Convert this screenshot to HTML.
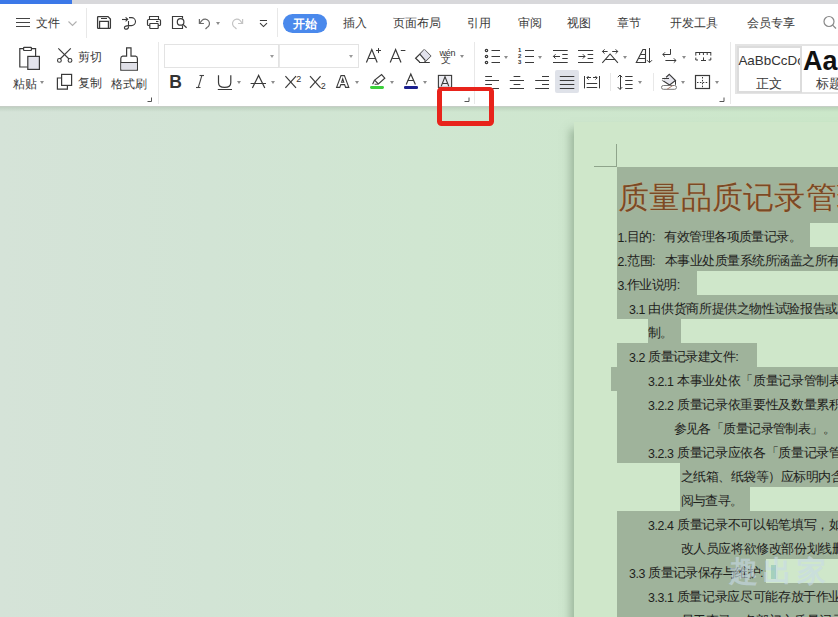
<!DOCTYPE html>
<html><head><meta charset="utf-8">
<style>
*{margin:0;padding:0;box-sizing:border-box}
html,body{width:838px;height:617px;overflow:hidden;background:#fff}
body{position:relative;font-family:"Liberation Sans",sans-serif;color:#333}
.a{position:absolute}
.t{position:absolute;font-size:12px;line-height:14px;white-space:nowrap;color:#3a3a3a}
svg{position:absolute;overflow:visible}
svg.ic{fill:none;stroke:#3a3a3a;stroke-width:1.1}
.dd{position:absolute;width:0;height:0;border-left:2.5px solid transparent;border-right:2.5px solid transparent;border-top:3px solid #8c8c8c}
.sep{position:absolute;width:1px;background:#e8e8e8}
.doc{position:absolute;font-size:13px;letter-spacing:-0.56px;line-height:14px;white-space:nowrap;color:#1e221c}
.n{font-style:normal;letter-spacing:-0.4px;font-size:12.4px;position:relative;top:0.7px}
.sel{position:absolute;background:#9fb39b}
</style></head><body>

<!-- top tab strip -->
<div class="a" style="left:0;top:0;width:838px;height:4px;background:#d8d8db"></div>
<div class="a" style="left:0;top:0;width:72px;height:4px;background:#3b78e8"></div>

<!-- ===== menu row ===== -->
<div class="a" style="left:16px;top:17.5px;width:14px;height:1.3px;background:#444"></div>
<div class="a" style="left:16px;top:21.7px;width:14px;height:1.3px;background:#444"></div>
<div class="a" style="left:16px;top:26px;width:14px;height:1.3px;background:#444"></div>
<div class="t" style="left:36px;top:15.5px">文件</div>
<svg style="left:0;top:0" width="1" height="1" class="ic"><polyline points="68.5,21.5 72.5,25.5 76.5,21.5" style="stroke:#b0b0b0"/></svg>
<div class="sep" style="left:86px;top:8px;height:30px"></div>

<svg style="left:0;top:0" width="1" height="1" class="ic">
 <!-- save -->
 <path d="M97.6,17.2 Q97.6,16.6 98.2,16.6 L108,16.6 L110.4,19 L110.4,27.8 Q110.4,28.4 109.8,28.4 L98.2,28.4 Q97.6,28.4 97.6,27.8 Z" style="stroke-width:1.3"/>
 <line x1="101" y1="18.5" x2="107" y2="18.5" style="stroke-width:1"/>
 <path d="M99.6,28.4 L99.6,21.4 L108.4,21.4 L108.4,28.4" style="stroke-width:1.2"/>
 <!-- share -->
 <line x1="122" y1="19.5" x2="127.5" y2="19.5"/>
 <polyline points="125.6,17.3 127.7,19.3 125.6,21.3"/>
 <path d="M129,17.6 L131.5,17.6 A4,4 0 0 1 131.5,25.6 L128.8,25.6"/>
 <line x1="128.5" y1="21" x2="128.5" y2="26.4"/>
 <path d="M128.6,26.4 C128.6,29.8 124.4,29.8 124.4,27.8 C124.4,26 127,25.6 128.8,25.6"/>
 <!-- print -->
 <path d="M149.5,19.5 L149.5,16.5 L158.5,16.5 L158.5,19.5" style="stroke-width:1.1"/>
 <path d="M149.8,25.5 L148.6,25.5 Q147.5,25.5 147.5,24.4 L147.5,20.6 Q147.5,19.5 148.6,19.5 L159.4,19.5 Q160.5,19.5 160.5,20.6 L160.5,24.4 Q160.5,25.5 159.4,25.5 L158.2,25.5" style="stroke-width:1.2"/>
 <line x1="156" y1="21.5" x2="158.5" y2="21.5" style="stroke-width:1.1"/>
 <rect x="149.8" y="23.5" width="8.4" height="5" rx="0.5" style="stroke-width:1.2"/>
 <!-- preview -->
 <path d="M182.5,18.6 L182.5,16.5 L172.5,16.5 L172.5,28.5 L182.5,28.5 L182.5,25.6" style="stroke-width:1.15"/>
 <circle cx="180.6" cy="21.9" r="3.3" style="stroke-width:1.2"/>
 <line x1="183" y1="24.4" x2="186.6" y2="27.8" style="stroke-width:1.2"/>
 <!-- undo -->
 <g style="stroke:#6a6a6a;stroke-width:1.2">
 <polyline points="199.4,19 199.4,23.5 203.9,23.5"/>
 <path d="M199.6,23.3 L202,20.4 A4.4,4.4 0 1 1 207,27.5 L205.5,29"/>
 </g>
 <g style="stroke:#c4c4c4;stroke-width:1.2">
 <polyline points="242.6,19 242.6,23.5 238.1,23.5"/>
 <path d="M242.4,23.3 L240,20.4 A4.4,4.4 0 1 0 235,27.5 L236.5,29"/>
 </g>
 <!-- customize -->
 <line x1="259.9" y1="20.5" x2="267" y2="20.5" style="stroke-width:1"/>
 <polyline points="260,23.2 263.5,26.6 267,23.2" style="stroke-width:1.1"/>
</svg>
<div class="dd" style="left:216px;top:22px"></div>
<div class="sep" style="left:276.5px;top:8px;height:29px"></div>

<!-- tabs -->
<div class="a" style="left:283px;top:13.5px;width:44px;height:19px;border-radius:10px;background:#4a89ec"></div>
<div class="t" style="left:292.5px;top:16.5px;color:#fff;font-weight:bold">开始</div>
<div class="t" style="left:342.5px;top:16px">插入</div>
<div class="t" style="left:392.5px;top:16px">页面布局</div>
<div class="t" style="left:466.5px;top:16px">引用</div>
<div class="t" style="left:517.5px;top:16px">审阅</div>
<div class="t" style="left:566.5px;top:16px">视图</div>
<div class="t" style="left:616.5px;top:16px">章节</div>
<div class="t" style="left:669.5px;top:16px">开发工具</div>
<div class="t" style="left:747px;top:16px">会员专享</div>
<svg style="left:0;top:0" width="1" height="1" class="ic"><circle cx="829" cy="21.5" r="5" style="stroke:#888;stroke-width:1.2"/><line x1="832.6" y1="25.1" x2="836" y2="28.5" style="stroke:#888;stroke-width:1.2"/></svg>

<!-- ===== toolbar ===== -->
<svg style="left:0;top:0" width="1" height="1" class="ic">
 <!-- paste -->
 <path d="M23.4,48.6 L19.8,48.6 L19.8,67 L27.6,67" style="stroke-width:1.2"/>
 <path d="M31.4,48.6 L35.6,48.6 L35.6,56.4" style="stroke-width:1.2"/>
 <rect x="23.6" y="47.3" width="7.8" height="3.2" rx="0.5" style="stroke-width:1.2"/>
 <rect x="27.8" y="56.4" width="11.6" height="13" style="fill:#e4e4ec;stroke-width:1.2"/>
 <!-- scissors -->
 <line x1="58.3" y1="48.3" x2="69" y2="59" style="stroke-width:1.1"/>
 <line x1="70.8" y1="48.3" x2="60.1" y2="59" style="stroke-width:1.1"/>
 <circle cx="59.4" cy="60.4" r="1.9" style="stroke-width:1.1"/>
 <circle cx="70" cy="60.4" r="1.9" style="stroke-width:1.1"/>
 <!-- copy -->
 <path d="M61.6,78 L57.4,78 L57.4,89.2 L67.4,89.2 L67.4,85.4" style="stroke-width:1.2"/>
 <rect x="61.6" y="74.4" width="10" height="11" style="fill:#fff;stroke-width:1.2"/>
 <!-- brush -->
 <path d="M126.6,56.2 L126.6,47.8 L131,47.8 L131,56.2 L135.6,56.2 Q137.4,56.4 137.4,58.6 L137.4,70.2 L120.8,70.2 L120.8,58.6 Q120.8,56.4 122.6,56.2 Z" style="stroke-width:1.2"/>
 <rect x="121.4" y="62.6" width="15.4" height="7" style="fill:#e0e0e8;stroke:none"/>
 <line x1="120.8" y1="62.5" x2="137.4" y2="62.5" style="stroke-width:1"/>
</svg>
<div class="t" style="left:77.5px;top:50px">剪切</div>
<div class="t" style="left:77.5px;top:75.5px">复制</div>
<div class="t" style="left:13px;top:76.5px">粘贴</div>
<div class="dd" style="left:40px;top:81px"></div>
<div class="t" style="left:111px;top:76.5px">格式刷</div>
<svg style="left:0;top:0" width="1" height="1" class="ic"><polyline points="147.5,101.5 151.5,101.5 151.5,97.5" style="stroke:#555;stroke-width:1"/></svg>
<div class="sep" style="left:157.5px;top:42px;height:62px"></div>

<!-- font boxes -->
<div class="a" style="left:163.5px;top:44px;width:115.5px;height:23.5px;border:1px solid #e3e3e3;background:#fff"></div>
<div class="a" style="left:278.5px;top:44px;width:80px;height:23.5px;border:1px solid #e3e3e3;border-left:1px solid #e8e8e8;background:#fff"></div>
<div class="dd" style="left:269.5px;top:55px;border-top-color:#9a9a9a"></div>
<div class="dd" style="left:348.5px;top:55px;border-top-color:#9a9a9a"></div>

<!-- B I U A X2 X2 A -->
<div class="a" style="left:169.2px;top:73px;font-size:17.5px;line-height:18px;font-weight:bold;color:#333">B</div>
<svg style="left:0;top:0" width="1" height="1" class="ic">
 <g style="stroke:#444;stroke-width:1.1">
 <line x1="199.5" y1="75.5" x2="204" y2="75.5"/>
 <line x1="196" y1="87.5" x2="200.5" y2="87.5"/>
 <line x1="201.8" y1="75.8" x2="198.2" y2="87.6"/>
 </g>
 <path d="M218.5,75.2 L218.5,82.5 Q218.5,87.4 224.6,87.4 Q230.8,87.4 230.8,82.5 L230.8,75.2" style="stroke-width:1.2"/>
 <line x1="217.8" y1="89.5" x2="232" y2="89.5" style="stroke-width:1"/>
 <polyline points="252.4,88 258.6,75.4 264.8,88" style="stroke-width:1.2"/>
 <line x1="250.6" y1="83.5" x2="266" y2="83.5" style="stroke-width:1"/>
 <line x1="285.4" y1="76.2" x2="296" y2="87.8" style="stroke-width:1.2"/>
 <line x1="296" y1="76.2" x2="285.4" y2="87.8" style="stroke-width:1.2"/>
 <line x1="310" y1="76.2" x2="320.6" y2="87.8" style="stroke-width:1.2"/>
 <line x1="320.6" y1="76.2" x2="310" y2="87.8" style="stroke-width:1.2"/>
 <path d="M336.6,87.4 L341,75.6 L344.4,75.6 L348.8,87.4 L345.6,87.4 L344.6,84.6 L340.8,84.6 L339.8,87.4 Z M341.6,82.2 L343.8,82.2 L342.7,78.8 Z" style="stroke-width:1.1"/>
</svg>
<div class="a" style="left:296.2px;top:75.2px;font-size:9px;line-height:9px;color:#333">2</div>
<div class="a" style="left:320.8px;top:82.2px;font-size:9px;line-height:9px;color:#333">2</div>
<div class="dd" style="left:237px;top:81px"></div>
<div class="dd" style="left:271px;top:81px"></div>
<div class="dd" style="left:355px;top:81px"></div>

<!-- A+ A- eraser wen -->
<svg style="left:0;top:0" width="1" height="1" class="ic">
 <polyline points="366.4,62.6 371.8,49.6 377.2,62.6" style="stroke-width:1.2"/>
 <line x1="368.4" y1="58.5" x2="375.2" y2="58.5" style="stroke-width:1"/>
 <line x1="376" y1="50.5" x2="381" y2="50.5" style="stroke-width:1"/>
 <line x1="378.5" y1="48.1" x2="378.5" y2="53.1" style="stroke-width:1"/>
 <polyline points="390.2,62.6 395.6,49.6 401,62.6" style="stroke-width:1.2"/>
 <line x1="392.2" y1="58.5" x2="399" y2="58.5" style="stroke-width:1"/>
 <line x1="400.8" y1="50.5" x2="405.4" y2="50.5" style="stroke-width:1"/>
 <!-- eraser -->
 <path d="M424.3,49.6 L430.6,55.9 L424.6,62 M419.6,62 L415.6,58.2 L424.3,49.6" style="stroke-width:1.2"/>
 <path d="M424.3,49.6 L430.6,55.9 L425.2,61.2 L419.9,54.4 Z" style="fill:#e2e2ec;stroke:none"/>
 <line x1="419.8" y1="54.2" x2="425.4" y2="60.6" style="stroke-width:1.2"/>
 <line x1="419" y1="62.5" x2="429.8" y2="62.5" style="stroke-width:1"/>
</svg>
<div class="a" style="left:439.6px;top:49px;font-size:9px;line-height:9px;color:#333;letter-spacing:-0.3px">wén</div>
<div class="a" style="left:441.4px;top:55px;font-size:10px;line-height:10px;color:#333">文</div>
<div class="dd" style="left:460px;top:55px"></div>

<!-- highlighter, font color, shading -->
<svg style="left:0;top:0" width="1" height="1" class="ic">
 <path d="M372.6,84.2 L374.4,80.4 L381.6,74.6 L384.8,78.2 L378.4,84 L374.6,84.2" style="stroke-width:1.15"/>
 <line x1="374.6" y1="80.2" x2="378.4" y2="84" style="stroke-width:1.1"/>
 <polyline points="406.2,84.4 410.8,74 415.4,84.4" style="stroke-width:1.2"/>
 <line x1="407.8" y1="80.5" x2="413.8" y2="80.5" style="stroke-width:1"/>
 <rect x="438.4" y="75.4" width="13.2" height="12" style="fill:#ececf2;stroke-width:1.1"/>
 <polyline points="441.2,86.2 445,76.8 448.8,86.2" style="stroke-width:1.1"/>
 <line x1="442.4" y1="83.5" x2="447.6" y2="83.5" style="stroke-width:1"/>
</svg>
<div class="a" style="left:370px;top:85.9px;width:13.8px;height:2.8px;border-radius:1.4px;background:#3cd03c"></div>
<div class="a" style="left:404px;top:86.2px;width:13.8px;height:2.6px;border-radius:1.3px;background:#1a1f8e"></div>
<div class="dd" style="left:389.5px;top:81px"></div>
<div class="dd" style="left:423px;top:81px"></div>
<svg style="left:0;top:0" width="1" height="1" class="ic"><polyline points="464.5,101.5 469,101.5 469,97.5" style="stroke:#555;stroke-width:1"/></svg>
<div class="sep" style="left:474px;top:42px;height:62px"></div>

<!-- paragraph group -->
<svg style="left:0;top:0" width="1" height="1" class="ic">
 <g style="stroke-width:1">
 <circle cx="486.5" cy="50.5" r="1.2" style="stroke-width:1.2"/><circle cx="486.5" cy="56.5" r="1.2" style="stroke-width:1.2"/><circle cx="486.5" cy="62.5" r="1.2" style="stroke-width:1.2"/>
 <line x1="491.5" y1="50.5" x2="500" y2="50.5"/><line x1="491.5" y1="56.5" x2="500" y2="56.5"/><line x1="491.5" y1="62.5" x2="500" y2="62.5"/>
 <line x1="525" y1="50.5" x2="534" y2="50.5"/><line x1="525" y1="56.5" x2="534" y2="56.5"/><line x1="525" y1="62.5" x2="534" y2="62.5"/>
 <!-- dec indent -->
 <line x1="553" y1="50.5" x2="567.7" y2="50.5"/><line x1="553" y1="62.5" x2="567.7" y2="62.5"/>
 <line x1="562.3" y1="54.5" x2="567.7" y2="54.5"/><line x1="562.3" y1="58.5" x2="567.7" y2="58.5"/>
 <line x1="553.4" y1="56.5" x2="560" y2="56.5"/><polyline points="555.6,54.2 553.4,56.4 555.6,58.6"/>
 <!-- inc indent -->
 <line x1="578" y1="50.5" x2="593.2" y2="50.5"/><line x1="578" y1="62.5" x2="593.2" y2="62.5"/>
 <line x1="587.6" y1="54.5" x2="593.2" y2="54.5"/><line x1="587.6" y1="58.5" x2="593.2" y2="58.5"/>
 <line x1="578.4" y1="56.5" x2="585" y2="56.5"/><polyline points="582.8,54.2 585,56.4 582.8,58.6"/>
 <!-- align left/center/right -->
 <line x1="485.2" y1="76.5" x2="492" y2="76.5"/><line x1="485.2" y1="80.5" x2="499" y2="80.5"/><line x1="485.2" y1="84.5" x2="492" y2="84.5"/><line x1="485.2" y1="88.5" x2="499" y2="88.5"/>
 <line x1="513.6" y1="76.5" x2="520.3" y2="76.5"/><line x1="509.8" y1="80.5" x2="524" y2="80.5"/><line x1="513.6" y1="84.5" x2="520.3" y2="84.5"/><line x1="509.8" y1="88.5" x2="524" y2="88.5"/>
 <line x1="542" y1="76.5" x2="549" y2="76.5"/><line x1="535.2" y1="80.5" x2="549" y2="80.5"/><line x1="542" y1="84.5" x2="549" y2="84.5"/><line x1="535.2" y1="88.5" x2="549" y2="88.5"/>
 </g>
</svg>
<div class="a" style="left:518px;top:47px;font-size:6px;line-height:6px;font-weight:bold;color:#333">1</div>
<div class="a" style="left:518px;top:53.3px;font-size:6px;line-height:6px;font-weight:bold;color:#333">2</div>
<div class="a" style="left:518px;top:59.3px;font-size:6px;line-height:6px;font-weight:bold;color:#333">3</div>
<div class="dd" style="left:504px;top:55.5px"></div>
<div class="dd" style="left:538px;top:55.5px"></div>
<div class="a" style="left:555.3px;top:70.2px;width:23.5px;height:23.2px;border-radius:2px;background:#dfe2e9"></div>
<svg style="left:0;top:0" width="1" height="1" class="ic">
 <g style="stroke-width:1">
 <line x1="559.8" y1="76.5" x2="574.3" y2="76.5"/><line x1="559.8" y1="80.5" x2="574.3" y2="80.5"/><line x1="559.8" y1="84.5" x2="574.3" y2="84.5"/><line x1="559.8" y1="88.5" x2="574.3" y2="88.5"/>
 </g>
 <g style="stroke-width:1">
 <!-- distributed -->
 <line x1="584.5" y1="76" x2="584.5" y2="88.4"/><line x1="599.5" y1="76" x2="599.5" y2="88.4"/>
 <line x1="586.6" y1="83.5" x2="597.2" y2="83.5"/><line x1="586.6" y1="87.5" x2="597.2" y2="87.5"/>
 <line x1="587" y1="77.5" x2="591" y2="77.5"/><polyline points="588.6,76 586.8,77.8 588.6,79.6"/>
 <line x1="593" y1="77.5" x2="597" y2="77.5"/><polyline points="595.4,76 597.2,77.8 595.4,79.6"/>
 <!-- chinese layout -->
 <line x1="602.4" y1="51.5" x2="607.6" y2="51.5"/><polyline points="604.6,49.3 602.4,51.5 604.6,53.7"/>
 <line x1="612.2" y1="51.5" x2="617.8" y2="51.5"/><polyline points="615.6,49.3 617.8,51.5 615.6,53.7"/>
 <polyline points="602.3,62.8 610.1,54 617.9,62.8" style="stroke-width:1.1"/>
 <line x1="605" y1="59.5" x2="615.2" y2="59.5"/>
 <!-- sort -->
 <path d="M642.9,49.5 L645.5,49.5 L645.5,62.5 L636.3,62.5 Z" style="stroke-width:1.1"/>
 <line x1="640.6" y1="54.5" x2="645.5" y2="54.5"/><line x1="638.6" y1="58.5" x2="645.5" y2="58.5"/>
 <line x1="649.5" y1="48" x2="649.5" y2="62.6"/><polyline points="647,60.2 649.5,62.7 652,60.2"/>
 <!-- return -->
 <polyline points="670.5,49 670.5,54.5 662.8,54.5"/><polyline points="665,52.3 662.8,54.5 665,56.7"/>
 <line x1="665.4" y1="60.5" x2="676" y2="60.5"/><polyline points="673.8,58.3 676,60.5 673.8,62.7"/>
 <!-- ruler -->
 <line x1="695.4" y1="52.5" x2="711.2" y2="52.5"/>
 <polyline points="695.8,52.6 695.8,55.6"/><polyline points="699.6,52.6 699.6,55"/><polyline points="703.4,52.6 703.4,55"/><polyline points="707.2,52.6 707.2,55"/><polyline points="710.8,52.6 710.8,55.6"/>
 <polyline points="695.8,57.6 695.8,60 698,60"/><polyline points="710.8,57.6 710.8,60 708.6,60"/>
 <line x1="701" y1="60.5" x2="706" y2="60.5"/><line x1="703.5" y1="57.4" x2="703.5" y2="60"/>
 </g>
</svg>
<div class="dd" style="left:623px;top:55.5px"></div>
<div class="dd" style="left:681.5px;top:55.5px"></div>
<div class="sep" style="left:609.5px;top:72.5px;height:18.5px"></div>
<div class="sep" style="left:652.5px;top:72.5px;height:18.5px"></div>
<svg style="left:0;top:0" width="1" height="1" class="ic">
 <g style="stroke-width:1">
 <!-- line spacing -->
 <line x1="620.5" y1="75" x2="620.5" y2="89.4"/><polyline points="617.8,77.2 620,75 622.2,77.2"/><polyline points="617.8,87.2 620,89.4 622.2,87.2"/>
 <line x1="625.2" y1="76.5" x2="632.6" y2="76.5"/><line x1="625.2" y1="80.5" x2="632.6" y2="80.5"/><line x1="625.2" y1="84.5" x2="632.6" y2="84.5"/><line x1="625.2" y1="88.5" x2="632.6" y2="88.5"/>
 <!-- shading -->
 <path d="M669.3,74.3 L675.5,80.5 L669.6,85 L662.6,80.5 Z" style="fill:#e7e7ef;stroke-width:1.1"/>
 <path d="M662.6,80.5 L666,77.2" style="stroke:#fff;stroke-width:1.6"/>
 <line x1="662.2" y1="78.5" x2="669" y2="78.5"/>
 <line x1="675.5" y1="80.5" x2="675.5" y2="84.8"/>
 <rect x="661.5" y="85.5" width="15" height="3.8" rx="1.9" style="stroke:#777"/>
 <line x1="667" y1="89.3" x2="672.8" y2="85.5" style="stroke:#a87c6c"/>
 <!-- borders -->
 <rect x="695.5" y="75.5" width="14" height="13" style="stroke-width:1.2"/>
 <line x1="702.5" y1="77" x2="702.5" y2="88" style="stroke-dasharray:1.5 1.4"/>
 <line x1="697" y1="82.5" x2="708" y2="82.5" style="stroke-dasharray:1.5 1.4"/>
 </g>
</svg>
<div class="dd" style="left:638px;top:81px"></div>
<div class="dd" style="left:681px;top:81px"></div>
<div class="dd" style="left:715px;top:81px"></div>
<svg style="left:0;top:0" width="1" height="1" class="ic"><polyline points="719.5,101.5 724,101.5 724,97.5" style="stroke:#555;stroke-width:1"/></svg>
<div class="sep" style="left:730px;top:42px;height:62px"></div>

<!-- styles gallery -->
<div class="a" style="left:735px;top:44px;width:110px;height:50px;border:2px solid #e4e4e4;background:#fff"></div>
<div class="a" style="left:736.5px;top:45.5px;width:65px;height:47px;border:2px solid #dcdcdc"></div>
<div class="a" style="left:738.4px;top:54.3px;width:62px;overflow:hidden;font-size:13.4px;line-height:14px;color:#333;white-space:nowrap">AaBbCcDc</div>
<div class="t" style="left:756px;top:77px;font-size:12.5px">正文</div>
<div class="a" style="left:803px;top:46.3px;font-size:27px;line-height:30px;font-weight:bold;color:#111;white-space:nowrap">Aa</div>
<div class="t" style="left:816px;top:77px;font-size:12.5px">标题</div>

<!-- toolbar bottom border/shadow -->
<div class="a" style="left:0;top:106px;width:838px;height:511px;background:linear-gradient(90deg,#d5e3d8 0%,#d2e4d5 25%,#d0e6d1 50%,#cbe7c9 100%)"></div>
<div class="a" style="left:0;top:105.5px;width:838px;height:1px;background:#c6cec6"></div>
<div class="a" style="left:0;top:106.5px;width:838px;height:5px;background:linear-gradient(rgba(160,180,160,0.4),rgba(160,180,160,0))"></div>

<!-- page -->
<div class="a" style="left:574px;top:122px;width:300px;height:520px;background:#cfe7ca;box-shadow:-6px 5px 8px -2px rgba(110,140,110,0.5)"></div>
<div class="a" style="left:616px;top:144px;width:1px;height:23px;background:#8fa48b"></div>
<div class="a" style="left:594px;top:166px;width:23px;height:1px;background:#8fa48b"></div>

<!-- selection blocks -->
<div class="sel" style="left:617px;top:167px;width:221px;height:56px"></div>
<div class="sel" style="left:617px;top:223px;width:193px;height:24px"></div>
<div class="sel" style="left:617px;top:247px;width:221px;height:24px"></div>
<div class="sel" style="left:617px;top:271px;width:80px;height:24px"></div>
<div class="sel" style="left:617px;top:295px;width:221px;height:24px"></div>
<div class="sel" style="left:648px;top:319px;width:33px;height:24px"></div>
<div class="sel" style="left:617px;top:343px;width:140px;height:24px"></div>
<div class="sel" style="left:611px;top:367px;width:227px;height:24px"></div>
<div class="sel" style="left:617px;top:391px;width:221px;height:72px"></div>
<div class="sel" style="left:680px;top:463px;width:158px;height:24px"></div>
<div class="sel" style="left:680px;top:487px;width:70px;height:24px"></div>
<div class="sel" style="left:617px;top:511px;width:221px;height:48px"></div>
<div class="sel" style="left:617px;top:559px;width:149px;height:24px"></div>
<div class="sel" style="left:617px;top:583px;width:221px;height:40px"></div>

<!-- document text -->
<div class="a" style="left:618px;top:180px;font-size:31px;letter-spacing:0.3px;line-height:36px;color:#7a4a26;text-shadow:0 0 1px rgba(235,190,140,0.9);white-space:nowrap">质量品质记录管理</div>
<div class="doc" style="left:617.5px;top:230px"><i class="n">1.</i>目的<span style="display:inline-block;width:12.44px">:</span>有效管理各项质量记录。</div>
<div class="doc" style="left:617.5px;top:254px;letter-spacing:-0.49px"><i class="n">2.</i>范围<span style="display:inline-block;width:12.44px">:</span>本事业处质量系统所涵盖之所有</div>
<div class="doc" style="left:617.5px;top:278px"><i class="n">3.</i>作业说明:</div>
<div class="doc" style="left:629px;top:302px;letter-spacing:-0.35px"><i class="n">3.1</i> 由供货商所提供之物性试验报告或</div>
<div class="doc" style="left:648px;top:326px">制。</div>
<div class="doc" style="left:629px;top:350px"><i class="n">3.2</i> 质量记录建文件:</div>
<div class="doc" style="left:648px;top:374px;letter-spacing:-0.31px"><i class="n">3.2.1</i> 本事业处依「质量记录管制表</div>
<div class="doc" style="left:648px;top:398px;letter-spacing:-0.32px"><i class="n">3.2.2</i> 质量记录依重要性及数量累积</div>
<div class="doc" style="left:673.5px;top:422px">参见各「质量记录管制表」。</div>
<div class="doc" style="left:648px;top:446px;letter-spacing:-0.32px"><i class="n">3.2.3</i> 质量记录应依各「质量记录管</div>
<div class="doc" style="left:680.5px;top:470px;letter-spacing:-0.48px">之纸箱、纸袋等）应标明内含</div>
<div class="doc" style="left:680.5px;top:494px">阅与查寻。</div>
<div class="doc" style="left:648px;top:518px;letter-spacing:-0.32px"><i class="n">3.2.4</i> 质量记录不可以铅笔填写，如</div>
<div class="doc" style="left:680.5px;top:542px;letter-spacing:-0.40px">改人员应将欲修改部份划线删</div>
<div class="doc" style="left:629px;top:566px"><i class="n">3.3</i> 质量记录保存与维护:</div>
<div class="doc" style="left:648px;top:590px;letter-spacing:-0.36px"><i class="n">3.3.1</i> 质量记录应尽可能存放于作业</div>
<div class="doc" style="left:680.5px;top:614px;letter-spacing:-0.40px">易于查寻，各部门之质量记录</div>

<!-- watermark -->
<div class="a" style="left:729px;top:554px;font-size:29px;line-height:34px;color:rgba(200,218,232,0.62);white-space:nowrap;font-weight:bold;letter-spacing:5px">趣出家</div>
<div class="a" style="left:771px;top:565px;width:5px;height:14px;background:rgba(90,170,160,0.35)"></div>

<!-- red annotation -->
<div class="a" style="left:437px;top:87.2px;width:56.8px;height:39.1px;border:5.3px solid #e8231b;border-top-width:4.9px;border-bottom-width:5.7px;border-right-width:5.2px;border-radius:4.5px"></div>

</body></html>
